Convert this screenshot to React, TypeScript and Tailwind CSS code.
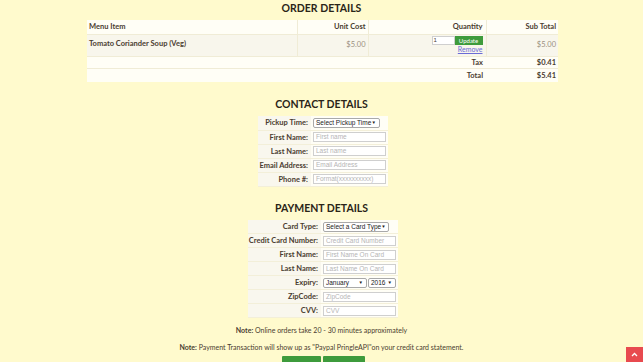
import React from "react";

const F = { fontFamily: "Lato, 'Open Sans', sans-serif" } as const;

function Input({ ph, w = "w-[73px]" }: { ph: string; w?: string }) {
  return (
    <div
      className={`${w} h-[10px] border border-[#cfcfcf] bg-white text-[6.5px] leading-[8px] text-[#b5b5b5] pl-[2px] overflow-hidden whitespace-nowrap`}
      style={{ fontFamily: "'Liberation Sans', Arial, sans-serif" }}
    >
      {ph}
    </div>
  );
}

function Select({ text, w }: { text: string; w: string }) {
  return (
    <div
      className={`${w} h-[10px] border border-[#a9a9a9] rounded-[2px] bg-white text-[6.5px] leading-[8px] text-[#222] pl-[2px] pr-[3px] flex items-center justify-between whitespace-nowrap overflow-hidden`}
      style={{ fontFamily: "'Liberation Sans', Arial, sans-serif" }}
    >
      <span>{text}</span>
      <span className="text-[4.5px]">▼</span>
    </div>
  );
}

function FormRow({ label, children, lw }: { label: string; children: React.ReactNode; lw: string }) {
  return (
    <tr className="border-b border-[#f3efd9]">
      <td className={`${lw} h-[14px] text-right pr-[3px] font-bold text-[7.5px] whitespace-nowrap text-[#4a3c30] bg-[#f9f7ee]`}>{label}</td>
      <td className="pl-[2px] pr-[2px] bg-[#fffef6]">{children}</td>
    </tr>
  );
}

export default function App() {
  return (
    <div className="w-[643px] h-[362px] overflow-hidden bg-[#fffacd] text-[#4a3c30] relative pt-[1px]" style={F}>
      <h2 className="text-center font-bold text-[10.5px] leading-[14px] text-[#2a2418]">ORDER DETAILS</h2>
      <table className="mt-[5px] ml-[87px] w-[471px] border-collapse bg-[#fffef6] text-[7.5px]">
        <tbody>
          <tr className="h-[14px] border-b border-[#f0ecd6]">
            <td className="w-[210px] pl-[2px] font-bold border-r border-[#f0ecd6]">Menu Item</td>
            <td className="w-[71px] text-right pr-[2px] font-bold border-r border-[#f0ecd6]">Unit Cost</td>
            <td className="w-[118px] text-right pr-[3px] font-bold border-r border-[#f0ecd6]">Quantity</td>
            <td className="text-right pr-[2px] font-bold">Sub Total</td>
          </tr>
          <tr className="h-[22px] bg-[#f8f6ec] border-b border-[#f0ecd6]">
            <td className="pl-[2px] font-bold align-top pt-[3px] border-r border-[#f0ecd6]">Tomato Coriander Soup (Veg)</td>
            <td className="text-right pr-[2px] text-[#9a9080] border-r border-[#f0ecd6]">$5.00</td>
            <td className="text-right pr-[3px] border-r border-[#f0ecd6]">
              <div className="flex flex-col items-end">
                <div className="flex">
                  <div className="w-[23px] h-[9px] border border-[#cfcfcf] bg-white text-[6px] leading-[7px] text-left pl-[1px]" style={{ fontFamily: "'Liberation Sans', Arial, sans-serif" }}>1</div>
                  <div className="w-[28px] h-[9px] bg-[#3e9b3c] text-white text-[6px] leading-[9px] text-center">Update</div>
                </div>
                <span className="text-[#6b6bd6] underline text-[7px] leading-[9px]">Remove</span>
              </div>
            </td>
            <td className="text-right pr-[2px] text-[#9a9080]">$5.00</td>
          </tr>
          <tr className="h-[12px] border-b border-[#f0ecd6]">
            <td colSpan={3} className="text-right pr-[3px] font-bold">Tax</td>
            <td className="text-right pr-[2px] font-bold">$0.41</td>
          </tr>
          <tr className="h-[14px]">
            <td colSpan={3} className="text-right pr-[3px] font-bold">Total</td>
            <td className="text-right pr-[2px] font-bold">$5.41</td>
          </tr>
        </tbody>
      </table>

      <h2 className="text-center font-bold text-[10.5px] leading-[14px] mt-[15px] text-[#2a2418]">CONTACT DETAILS</h2>
      <table className="mt-[5px] ml-[258px] border-collapse">
        <tbody>
          <FormRow lw="w-[53px]" label="Pickup Time:"><Select text="Select Pickup Time" w="w-[67px]" /></FormRow>
          <FormRow lw="w-[53px]" label="First Name:"><Input ph="First name" /></FormRow>
          <FormRow lw="w-[53px]" label="Last Name:"><Input ph="Last name" /></FormRow>
          <FormRow lw="w-[53px]" label="Email Address:"><Input ph="Email Address" /></FormRow>
          <FormRow lw="w-[53px]" label="Phone #:"><Input ph="Format(xxxxxxxxxx)" /></FormRow>
        </tbody>
      </table>

      <h2 className="text-center font-bold text-[10.5px] leading-[14px] mt-[14px] text-[#2a2418]">PAYMENT DETAILS</h2>
      <table className="mt-[5px] ml-[248px] border-collapse">
        <tbody>
          <FormRow lw="w-[73px]" label="Card Type:"><Select text="Select a Card Type" w="w-[66px]" /></FormRow>
          <FormRow lw="w-[73px]" label="Credit Card Number:"><Input ph="Credit Card Number" /></FormRow>
          <FormRow lw="w-[73px]" label="First Name:"><Input ph="First Name On Card" /></FormRow>
          <FormRow lw="w-[73px]" label="Last Name:"><Input ph="Last Name On Card" /></FormRow>
          <FormRow lw="w-[73px]" label="Expiry:">
            <div className="flex gap-[1px]">
              <Select text="January" w="w-[44px]" />
              <Select text="2016" w="w-[28px]" />
            </div>
          </FormRow>
          <FormRow lw="w-[73px]" label="ZipCode:"><Input ph="ZipCode" /></FormRow>
          <FormRow lw="w-[73px]" label="CVV:"><Input ph="CVV" /></FormRow>
        </tbody>
      </table>

      <p className="text-center text-[7px] mt-[7px] leading-[10px]"><b>Note:</b> Online orders take 20 - 30 minutes approximately</p>
      <p className="text-center text-[7px] mt-[7px] leading-[10px]"><b>Note:</b> Payment Transaction will show up as "Paypal PringleAPI"on your credit card statement.</p>
      <div className="flex justify-center gap-[2px] mt-[4px] ml-[3px]">
        <div className="w-[39px] h-[10px] bg-[#3e9b3c] rounded-t-[1px]" />
        <div className="w-[42px] h-[10px] bg-[#3e9b3c] rounded-t-[1px]" />
      </div>
      <div className="absolute right-0 bottom-0 w-[17px] h-[15px] bg-[#e84a4f] flex items-center justify-center">
        <svg width="7" height="5" viewBox="0 0 7 5"><path d="M1 4 L3.5 1.5 L6 4" stroke="white" strokeWidth="1.3" fill="none" /></svg>
      </div>
    </div>
  );
}
